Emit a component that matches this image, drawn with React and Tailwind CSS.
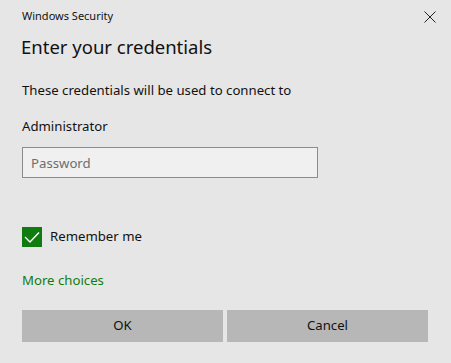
import { useState } from 'react';

const font = { fontFamily: '"Segoe UI", "Noto Sans", "Open Sans", sans-serif' };

const App = () => {
  const [remember, setRemember] = useState(true);
  const [password, setPassword] = useState('');

  return (
    <div className="w-[451px] h-[363px] bg-[#e6e6e6] text-[#000] relative overflow-hidden" style={font}>
      <div className="flex items-center justify-between pl-[22px] pr-[14px] pt-[7px] h-[26px]">
        <span className="text-[11px] text-[#111]">Windows Security</span>
        <button className="w-[14px] h-[14px] flex items-center justify-center">
          <svg width="12" height="12" viewBox="0 0 12 12">
            <path d="M0.5 0.5 L11.5 11.5 M11.5 0.5 L0.5 11.5" stroke="#222" strokeWidth="1" />
          </svg>
        </button>
      </div>

      <h1 className="pl-[21px] mt-[7px] text-[18.5px] leading-[28px] text-[#111]">Enter your credentials</h1>

      <p className="pl-[22px] mt-[19px] text-[13.2px] leading-[20px] text-[#111]">
        These credentials will be used to connect to
      </p>
      <p className="pl-[22px] mt-[16px] text-[13.2px] leading-[20px] text-[#111]">Administrator</p>

      <div className="pl-[22px] mt-[11px]">
        <input
          type="password"
          value={password}
          onChange={(e) => setPassword(e.target.value)}
          placeholder="Password"
          className="w-[296px] h-[31px] border border-[#8c8c8c] bg-[#f0f0f0] px-[8px] text-[13.2px] placeholder-[#6e6e6e] outline-none"
          style={font}
        />
      </div>

      <label className="flex items-center gap-[8px] pl-[22px] mt-[49px] cursor-pointer">
        <span
          onClick={() => setRemember(!remember)}
          className="w-[20px] h-[20px] bg-[#107c10] flex items-center justify-center"
        >
          {remember && (
            <svg width="16" height="12" viewBox="0 0 16 12">
              <path d="M1 6 L6 11 L15 1.5" fill="none" stroke="#fff" strokeWidth="1.4" />
            </svg>
          )}
        </span>
        <span className="text-[13.2px] text-[#111]">Remember me</span>
      </label>

      <p className="pl-[22px] mt-[23px] text-[13.2px] leading-[20px] text-[#107c10]">More choices</p>

      <div className="flex gap-[4px] pl-[22px] mt-[20px]">
        <button className="w-[201px] h-[32px] bg-[#b7b7b7] text-[13.2px] text-[#111]">OK</button>
        <button className="w-[201px] h-[32px] bg-[#b7b7b7] text-[13.2px] text-[#111]">Cancel</button>
      </div>
    </div>
  );
};

export default App;
